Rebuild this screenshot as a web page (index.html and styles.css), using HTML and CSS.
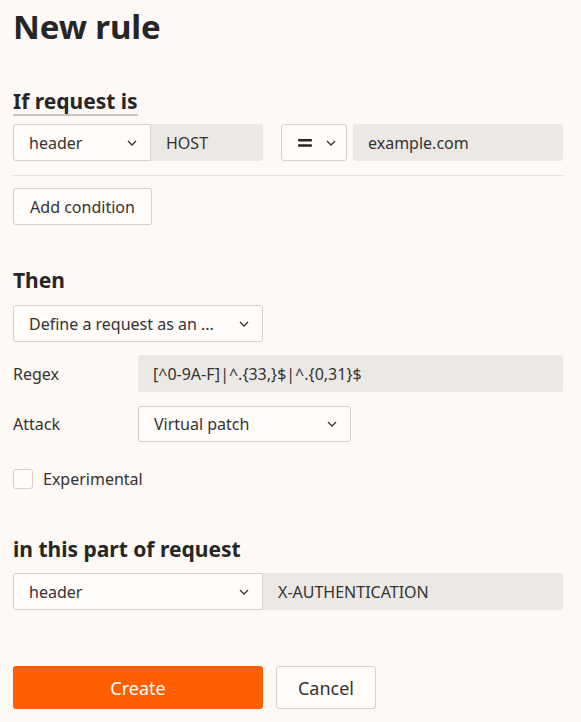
FILE: index.html
```html
<!DOCTYPE html>
<html lang="en">
<head>
<meta charset="utf-8">
<title>New rule</title>
<link rel="stylesheet" href="styles.css">
</head>
<body>
<main class="page">
  <h1 class="title">New rule</h1>

  <h2 class="section-title underlined">If request is</h2>
  <div class="cond-row">
    <div class="pair pair-small">
      <div class="select sel-header"><span>header</span><svg class="chev" viewBox="0 0 10 6"><path d="M1 1l4 4 4-4"/></svg></div>
      <div class="input inp-host">HOST</div>
    </div>
    <div class="select sel-eq">
      <svg class="eq" viewBox="0 0 14 8"><rect x="0" y="0" width="14" height="2.6" rx="1"/><rect x="0" y="5.2" width="14" height="2.6" rx="1"/></svg>
      <svg class="chev" viewBox="0 0 10 6"><path d="M1 1l4 4 4-4"/></svg>
    </div>
    <div class="input inp-value">example.com</div>
  </div>
  <hr class="divider">
  <button class="btn btn-secondary btn-add">Add condition</button>

  <h2 class="section-title then">Then</h2>
  <div class="select sel-define"><span>Define a request as an ...</span><svg class="chev" viewBox="0 0 10 6"><path d="M1 1l4 4 4-4"/></svg></div>

  <div class="field-row">
    <span class="label">Regex</span>
    <div class="input inp-regex">[^0-9A-F]|^.{33,}$|^.{0,31}$</div>
  </div>
  <div class="field-row">
    <span class="label">Attack</span>
    <div class="select sel-attack"><span>Virtual patch</span><svg class="chev" viewBox="0 0 10 6"><path d="M1 1l4 4 4-4"/></svg></div>
  </div>

  <label class="check-row"><span class="checkbox"></span><span>Experimental</span></label>

  <h2 class="section-title part">in this part of request</h2>
  <div class="pair pair-wide">
    <div class="select sel-part"><span>header</span><svg class="chev" viewBox="0 0 10 6"><path d="M1 1l4 4 4-4"/></svg></div>
    <div class="input inp-part">X-AUTHENTICATION</div>
  </div>

  <div class="actions">
    <button class="btn btn-primary">Create</button>
    <button class="btn btn-secondary btn-cancel">Cancel</button>
  </div>
</main>
</body>
</html>
```

FILE: styles.css
```css
html, body {
  margin: 0;
  padding: 0;
  background: #fef9f4;
}
body {
  font-family: "Noto Sans", "Open Sans", sans-serif;
  color: #262626;
  font-size: 16px;
}
.page {
  width: 550px;
  padding: 0 13px;
}
.title {
  margin: 0;
  padding-top: 5px;
  font-size: 33px;
  line-height: 44px;
  font-weight: 700;
  letter-spacing: -0.1px;
}
.section-title {
  margin: 0;
  font-size: 21px;
  line-height: 26px;
  font-weight: 700;
}
.underlined {
  display: inline-block;
  margin-top: 39px;
  border-bottom: 2px solid #c9c4bf;
  padding-bottom: 0;
}
.cond-row {
  display: flex;
  align-items: center;
  margin-top: 8px;
}
.pair {
  display: flex;
}
.pair-small { width: 250px; }
.select {
  box-sizing: border-box;
  height: 37px;
  border: 1px solid #d6d1cc;
  border-radius: 3px;
  background: #fffcf9;
  display: flex;
  align-items: center;
  justify-content: space-between;
  padding: 0 13px 0 15px;
  color: #333;
}
.input {
  box-sizing: border-box;
  height: 37px;
  background: #ece8e3;
  border-radius: 3px;
  display: flex;
  align-items: center;
  padding: 0 15px;
  color: #333;
}
.chev {
  width: 10px;
  height: 6px;
  fill: none;
  stroke: #333;
  stroke-width: 1.3;
}
.sel-header {
  width: 138px;
  border-radius: 3px 0 0 3px;
}
.inp-host {
  flex: 1;
  border-radius: 0 3px 3px 0;
}
.sel-eq {
  width: 66px;
  margin-left: 18px;
  padding: 0 10px 0 16px;
}
.eq {
  width: 14px;
  height: 8px;
  fill: #262626;
}
.inp-value {
  flex: 1;
  margin-left: 6px;
}
.divider {
  border: 0;
  border-top: 1px solid #e6e1dc;
  margin: 14px 0 0;
}
.btn {
  font-family: inherit;
  font-size: 16px;
  cursor: pointer;
  box-sizing: border-box;
  border-radius: 3px;
}
.btn-secondary {
  background: #fffcf9;
  border: 1px solid #d6d1cc;
  color: #333;
}
.btn-add {
  display: block;
  margin-top: 12px;
  height: 37px;
  width: 139px;
  padding: 0;
}
.then {
  margin-top: 42px;
}
.sel-define {
  width: 250px;
  margin-top: 12px;
}
.field-row {
  display: flex;
  align-items: center;
  margin-top: 13px;
}
.field-row + .field-row {
  margin-top: 14px;
}
.label {
  width: 125px;
  color: #333;
}
.inp-regex {
  flex: 1;
}
.sel-attack {
  width: 213px;
  height: 36px;
}
.check-row {
  display: flex;
  align-items: center;
  gap: 10px;
  margin-top: 26px;
  color: #333;
}
.checkbox {
  box-sizing: border-box;
  width: 20px;
  height: 20px;
  border: 1px solid #d6d1cc;
  border-radius: 3px;
  background: #fffcf9;
}
.part {
  margin-top: 46px;
}
.pair-wide {
  width: 550px;
  margin-top: 11px;
}
.sel-part {
  width: 250px;
  border-radius: 3px 0 0 3px;
}
.inp-part {
  flex: 1;
  border-radius: 0 3px 3px 0;
}
.actions {
  display: flex;
  gap: 13px;
  margin-top: 56px;
}
.btn-primary {
  width: 250px;
  height: 43px;
  background: #ff5f00;
  border: 0;
  color: #fff;
  font-size: 18px;
}
.btn-cancel {
  width: 100px;
  height: 43px;
  font-size: 18px;
}
```
